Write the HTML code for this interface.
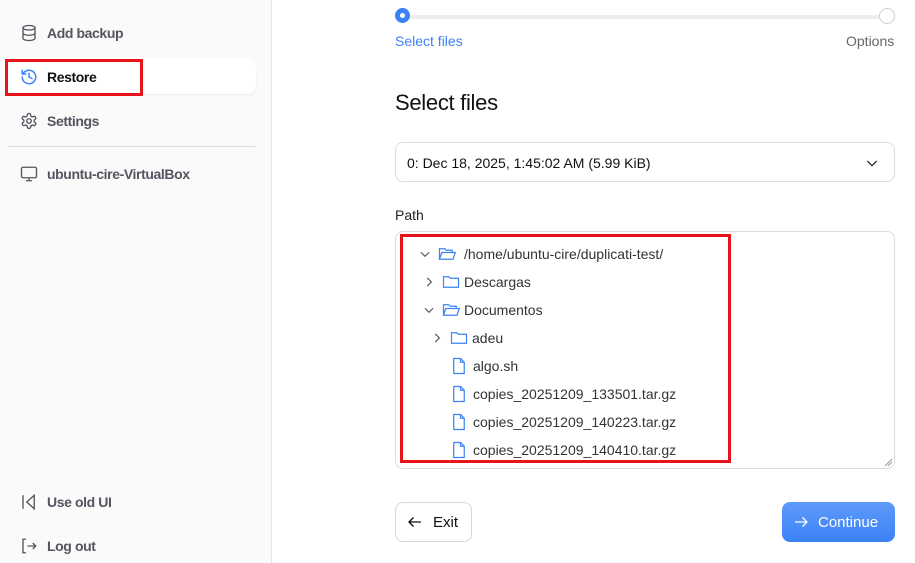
<!DOCTYPE html>
<html><head><meta charset="utf-8"><style>
*{box-sizing:border-box;margin:0;padding:0}
body{width:915px;height:563px;overflow:hidden;background:#fff;font-family:"Liberation Sans",sans-serif;position:relative;color:#222}
.side{position:absolute;left:0;top:0;width:272px;height:563px;background:#fafafa;border-right:1px solid #e6e6e6}
.item{position:absolute;left:20px;height:20px;display:flex;align-items:center;font-size:14px;font-weight:bold;color:#555560;letter-spacing:-0.4px}
.item svg{margin-right:9px}
.sel{position:absolute;left:6px;top:58px;width:250px;height:36px;background:#fff;border-radius:8px;box-shadow:0 1px 2px rgba(0,0,0,.06)}
.red{position:absolute;border:3px solid #e8141b}
.t{position:absolute;font-size:14px}
.row{position:absolute;display:flex;align-items:center;font-size:14px;color:#333;height:20px}
.row svg{flex:none}
</style></head><body>
<div class="side">
<div class="sel"></div>
<div class="red" style="left:5px;top:59px;width:138px;height:37px"></div>
<div class="item" style="top:23px"><svg width="18" height="18" viewBox="0 0 24 24" fill="none" stroke="#555560" stroke-width="1.8"><ellipse cx="12" cy="5" rx="8" ry="3"/><path d="M4 5v14c0 1.7 3.6 3 8 3s8-1.3 8-3V5M4 12c0 1.7 3.6 3 8 3s8-1.3 8-3"/></svg>Add backup</div>
<div class="item" style="top:67px;color:#111"><svg width="18" height="18" viewBox="0 0 24 24" fill="none" stroke="#3b82f6" stroke-width="2" stroke-linecap="round"><path d="M3 12a9 9 0 1 0 3-6.7L3 8"/><path d="M3 3v5h5"/><path d="M12 7v5l4 2"/></svg>Restore</div>
<div class="item" style="top:111px"><svg width="18" height="18" viewBox="0 0 24 24" fill="none" stroke="#555560" stroke-width="1.8"><circle cx="12" cy="12" r="3"/><path d="M12.2 2h-.4a2 2 0 0 0-2 2v.2a2 2 0 0 1-1 1.7l-.4.3a2 2 0 0 1-2 0l-.2-.1a2 2 0 0 0-2.7.7l-.2.4a2 2 0 0 0 .7 2.7l.2.1a2 2 0 0 1 1 1.7v.5a2 2 0 0 1-1 1.7l-.2.1a2 2 0 0 0-.7 2.7l.2.4a2 2 0 0 0 2.7.7l.2-.1a2 2 0 0 1 2 0l.4.3a2 2 0 0 1 1 1.7v.2a2 2 0 0 0 2 2h.4a2 2 0 0 0 2-2v-.2a2 2 0 0 1 1-1.7l.4-.3a2 2 0 0 1 2 0l.2.1a2 2 0 0 0 2.7-.7l.2-.4a2 2 0 0 0-.7-2.7l-.2-.1a2 2 0 0 1-1-1.7v-.5a2 2 0 0 1 1-1.7l.2-.1a2 2 0 0 0 .7-2.7l-.2-.4a2 2 0 0 0-2.7-.7l-.2.1a2 2 0 0 1-2 0l-.4-.3a2 2 0 0 1-1-1.7V4a2 2 0 0 0-2-2z"/></svg>Settings</div>
<div style="position:absolute;left:7px;top:146px;width:248px;height:1px;background:#ddd"></div>
<div class="item" style="top:164px"><svg width="18" height="18" viewBox="0 0 24 24" fill="none" stroke="#555560" stroke-width="1.8"><rect x="2" y="3" width="20" height="14" rx="2"/><path d="M8 21h8M12 17v4"/></svg>ubuntu-cire-VirtualBox</div>
<div class="item" style="top:492px"><svg width="18" height="18" viewBox="0 0 24 24" fill="none" stroke="#555560" stroke-width="1.8"><path d="M4 3v18"/><path d="M19 3 9 12l10 9z"/></svg>Use old UI</div>
<div class="item" style="top:536px"><svg width="18" height="18" viewBox="0 0 24 24" fill="none" stroke="#555560" stroke-width="1.8"><path d="M8 3H4v18h4M10 12h11M17 8l4 4-4 4"/></svg>Log out</div>
</div>

<div style="position:absolute;left:402px;top:15px;width:485px;height:4px;background:#eee;border-radius:2px"></div>
<div style="position:absolute;left:395px;top:8px;width:15px;height:15px;border-radius:50%;background:#3b82f6"><div style="position:absolute;left:5px;top:5px;width:5px;height:5px;border-radius:50%;background:#fff"></div></div>
<div style="position:absolute;left:879px;top:8px;width:16px;height:16px;border-radius:50%;background:#fff;border:1px solid #ccc"></div>
<div class="t" style="left:395px;top:33px;color:#3b82f6">Select files</div>
<div class="t" style="left:846px;top:33px;color:#666">Options</div>
<div style="position:absolute;left:395px;top:90px;font-size:22px;color:#111;letter-spacing:-0.3px">Select files</div>
<div style="position:absolute;left:395px;top:142px;width:500px;height:40px;border:1px solid #ddd;border-radius:8px;font-size:14px;padding:12px 11px;color:#111">0: Dec 18, 2025, 1:45:02 AM (5.99 KiB)
<svg style="position:absolute;right:14px;top:12px" width="16" height="16" viewBox="0 0 24 24" fill="none" stroke="#333" stroke-width="2"><path d="m5 9 7 7 7-7"/></svg></div>
<div class="t" style="left:395px;top:207px;color:#222">Path</div>
<div style="position:absolute;left:395px;top:231px;width:500px;height:238px;border:1px solid #ddd;border-radius:8px"></div>
<div class="red" style="left:400px;top:234px;width:331px;height:229px"></div>
<svg style="position:absolute;left:884px;top:458px" width="9" height="9" viewBox="0 0 9 9" stroke="#999"><path d="M1 8 8 1M4 8l4-4"/></svg>
<div class="row" style="left:418px;top:244px"><svg width="14" height="14" viewBox="0 0 24 24" fill="none" stroke="#555" stroke-width="2"><path d="m5 9 7 7 7-7"/></svg><svg style="margin:0 8px 0 6px" width="18" height="18" viewBox="0 0 24 24" fill="none" stroke="#3b82f6" stroke-width="1.6"><path d="M2 19V5h7l2 2h8v3M2 19l3-9h18l-3 9z"/></svg>/home/ubuntu-cire/duplicati-test/</div>
<div class="row" style="left:422px;top:272px"><svg width="14" height="14" viewBox="0 0 24 24" fill="none" stroke="#555" stroke-width="2"><path d="m9 5 7 7-7 7"/></svg><svg style="margin:0 4px 0 6px" width="18" height="18" viewBox="0 0 24 24" fill="none" stroke="#3b82f6" stroke-width="1.6"><path d="M2 5h7l2 2h11v12H2z"/></svg>Descargas</div>
<div class="row" style="left:422px;top:300px"><svg width="14" height="14" viewBox="0 0 24 24" fill="none" stroke="#555" stroke-width="2"><path d="m5 9 7 7 7-7"/></svg><svg style="margin:0 4px 0 6px" width="18" height="18" viewBox="0 0 24 24" fill="none" stroke="#3b82f6" stroke-width="1.6"><path d="M2 19V5h7l2 2h8v3M2 19l3-9h18l-3 9z"/></svg>Documentos</div>
<div class="row" style="left:430px;top:328px"><svg width="14" height="14" viewBox="0 0 24 24" fill="none" stroke="#555" stroke-width="2"><path d="m9 5 7 7-7 7"/></svg><svg style="margin:0 4px 0 6px" width="18" height="18" viewBox="0 0 24 24" fill="none" stroke="#3b82f6" stroke-width="1.6"><path d="M2 5h7l2 2h11v12H2z"/></svg>adeu</div>
<div class="row" style="left:450px;top:356px"><svg style="margin-right:5px" width="18" height="18" viewBox="0 0 24 24" fill="none" stroke="#3b82f6" stroke-width="1.6"><path d="M5 2h9l5 5v15H5z M14 2v5h5"/></svg>algo.sh</div>
<div class="row" style="left:450px;top:384px"><svg style="margin-right:5px" width="18" height="18" viewBox="0 0 24 24" fill="none" stroke="#3b82f6" stroke-width="1.6"><path d="M5 2h9l5 5v15H5z M14 2v5h5"/></svg>copies_20251209_133501.tar.gz</div>
<div class="row" style="left:450px;top:412px"><svg style="margin-right:5px" width="18" height="18" viewBox="0 0 24 24" fill="none" stroke="#3b82f6" stroke-width="1.6"><path d="M5 2h9l5 5v15H5z M14 2v5h5"/></svg>copies_20251209_140223.tar.gz</div>
<div class="row" style="left:450px;top:440px"><svg style="margin-right:5px" width="18" height="18" viewBox="0 0 24 24" fill="none" stroke="#3b82f6" stroke-width="1.6"><path d="M5 2h9l5 5v15H5z M14 2v5h5"/></svg>copies_20251209_140410.tar.gz</div>

<div style="position:absolute;left:395px;top:502px;width:77px;height:40px;border:1px solid #d8d8d8;border-radius:8px;display:flex;align-items:center;padding-left:10px;font-size:15px;color:#111"><svg style="margin-right:9px" width="18" height="18" viewBox="0 0 24 24" fill="none" stroke="#111" stroke-width="1.8"><path d="M20 12H4M10 6l-6 6 6 6"/></svg>Exit</div>
<div style="position:absolute;left:782px;top:502px;width:113px;height:40px;background:linear-gradient(#5e9bfa,#3b82f6);border-radius:8px;display:flex;align-items:center;padding-left:10px;font-size:15px;color:#fff"><svg style="margin-right:8px" width="18" height="18" viewBox="0 0 24 24" fill="none" stroke="#fff" stroke-width="1.8"><path d="M4 12h16M14 6l6 6-6 6"/></svg>Continue</div>
</body></html>
